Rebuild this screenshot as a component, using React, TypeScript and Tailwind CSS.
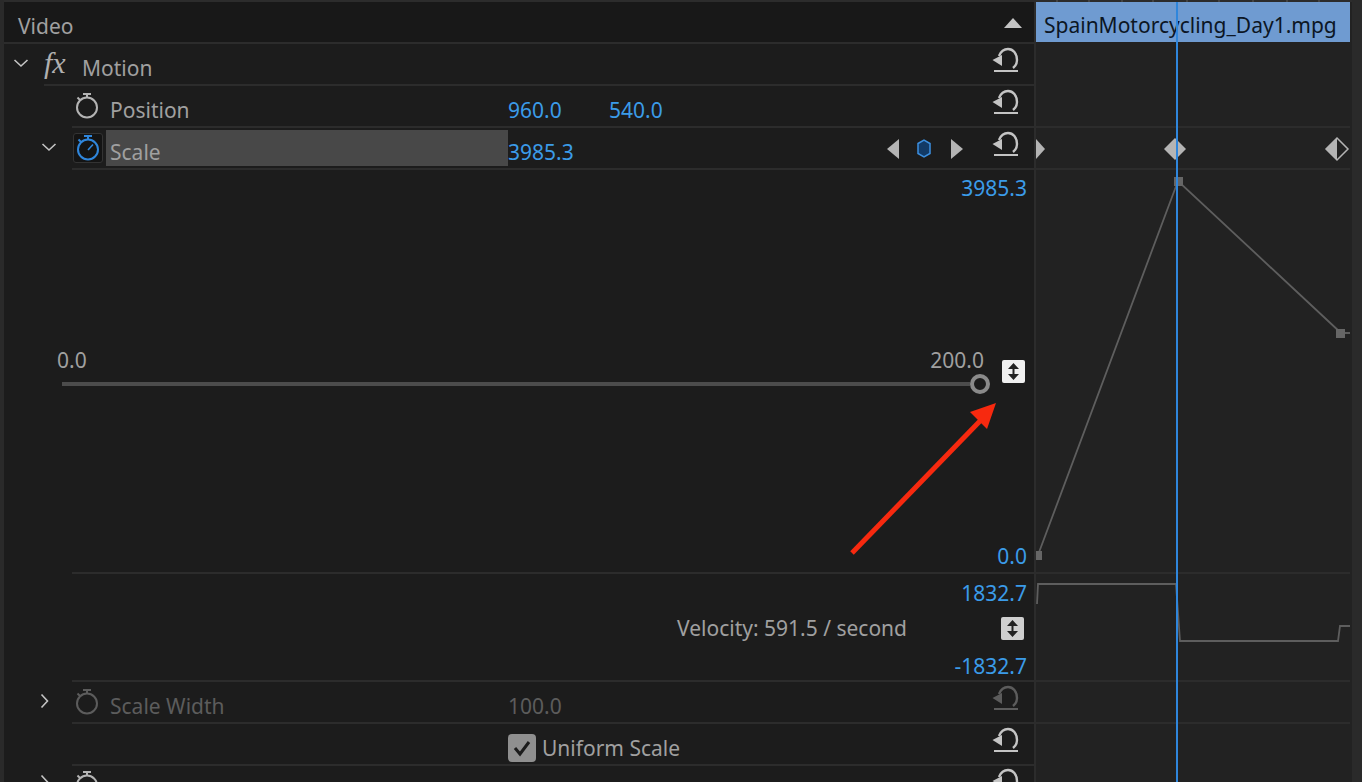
import { ReactNode } from "react";

function Stopwatch({ color = "#b4b4b4", needle = false }: { color?: string; needle?: boolean }) {
    return (
        <svg width="26" height="28" viewBox="0 0 26 28" fill="none" stroke={color} className="shrink-0">
            <circle cx="13" cy="15.5" r="10" strokeWidth="2" />
            <path d="M9 2h8M13 2v3" strokeWidth="2" />
            <path d="M3.500 5.500l2.500 2.500" strokeWidth="2" />
            {needle && <path d="M13 16l5-5.500" strokeWidth="1.600" />}
        </svg>
    );
}

function Reset({ color = "#c4c4c4" }: { color?: string }) {
    return (
        <svg width="27" height="26" viewBox="0 0 27 26" fill="none" className="shrink-0">
            <path d="M7 9C9 4 12 2 16 2c5 0 9 4.500 9 11 0 3.500-1.500 6-4 8" stroke={color} strokeWidth="2.400" />
            <path d="M0.500 13L10 8v11z" fill={color} />
            <path d="M2 24h24" stroke={color} strokeWidth="2" />
        </svg>
    );
}

function Chevron({ open = true, color = "#c4c4c4" }: { open?: boolean; color?: string }) {
    return (
        <svg width="16" height="16" viewBox="0 0 16 16" fill="none" stroke={color} strokeWidth="1.600" className="shrink-0">
            {open ? <path d="M1.500 5l6.500 6 6.500-6" /> : <path d="M4.500 1.500l6 6.500-6 6.500" />}
        </svg>
    );
}

function UpDown({ bg }: { bg: string }) {
    return (
        <div className={`w-[23px] h-[23px] rounded-[2px] flex items-center justify-center ${bg}`}>
            <svg width="13" height="19" viewBox="0 0 13 19" fill="#222222">
                <path d="M6.500 1L12 7H1zM6.500 18L1 12h11z" />
                <rect x="5.500" y="5" width="2" height="9" />
            </svg>
        </div>
    );
}

function Row({ children, line = "ml-[68px]" }: { children: ReactNode; line?: string }) {
    return (
        <div>
            <div className="h-[40px] flex items-center">{children}</div>
            <div className={`h-[2px] bg-[#2c2c2c] ${line}`} />
        </div>
    );
}

function Value({ children, muted }: { children: ReactNode; muted?: boolean }) {
    return <span className={muted ? "text-[#5c5c5c]" : "text-[#3b9be8]"}>{children}</span>;
}

function LeftPanel() {
    return (
        <div className="w-[1034px] shrink-0 bg-[#1c1c1c] border-l-[4px] border-[#2a2a2a] text-[#a0a0a0]">
            <div className="h-[2px] bg-[#2c2c2c]" />
            <div className="h-[40px] bg-[#181818] flex items-center pl-[14px] pr-[12px] justify-between">
                <span className="mt-[10px]">Video</span>
                <div className="w-0 h-0 border-l-[9px] border-r-[9px] border-b-[10px] border-l-transparent border-r-transparent border-b-[#c4c4c4] mt-[2px]" />
            </div>
            <div className="h-[2px] bg-[#2c2c2c]" />

            <Row line="ml-[40px]">
                <div className="w-[40px] pl-[9px] mt-[-2px]"><Chevron /></div>
                <span className="w-[38px] text-[#b0b0b0] text-[30px] italic leading-none mt-[-2px]" style={{ fontFamily: '"Liberation Serif", serif' }}>fx</span>
                <span className="flex-1 mt-[10px]">Motion</span>
                <div className="mr-[15px] mt-[-8px]"><Reset /></div>
            </Row>

            <Row>
                <div className="w-[68px]" />
                <div className="w-[38px] mt-[-1px] pl-[2px]"><Stopwatch /></div>
                <span className="w-[398px] mt-[10px]">Position</span>
                <span className="w-[101px] mt-[10px]"><Value>960.0</Value></span>
                <span className="flex-1 mt-[10px]"><Value>540.0</Value></span>
                <div className="mr-[15px] mt-[-8px]"><Reset /></div>
            </Row>

            <Row>
                <div className="w-[37px] shrink-0" />
                <div className="w-[32px] shrink-0 mt-[-2px]"><Chevron /></div>
                <div className="w-[30px] h-[30px] shrink-0 bg-[#141414] border border-[#333333] rounded-[3px] flex items-center justify-center mr-[3px]">
                    <Stopwatch color="#2f86dc" needle />
                </div>
                <div className="w-[402px] h-[36px] bg-[#484848] flex items-center pl-[4px] shrink-0">
                    <span className="mt-[10px]">Scale</span>
                </div>
                <span className="flex-1 mt-[10px]"><Value>3985.3</Value></span>
                <svg width="92" height="20" viewBox="0 0 92 20" className="mr-[19px] shrink-0 mt-[2px]">
                    <path d="M18 0v20L6 10z" fill="#b4b4b4" />
                    <path d="M37 4.500l6-3.500 6 3.500v10l-6 3.500-6-3.500z" fill="#123a66" stroke="#3b8fe0" strokeWidth="1.500" />
                    <path d="M70 0v20l12-10z" fill="#b4b4b4" />
                </svg>
                <div className="mr-[15px] mt-[-8px]"><Reset /></div>
            </Row>

            <div className="h-[402px] ml-[53px] mr-[7px] flex flex-col">
                <div className="text-right text-[#3b9be8] leading-[30px] mt-[3px]">3985.3</div>
                <div className="flex justify-between mt-[143px] leading-[28px]">
                    <span>0.0</span>
                    <span className="mr-[43px]">200.0</span>
                </div>
                <div className="flex items-center ml-[5px]">
                    <div className="w-[908px] h-[4px] bg-[#4c4c4c]" />
                    <div className="w-[20px] h-[20px] rounded-full border-[4px] border-[#8a8a8a] shrink-0" />
                    <div className="ml-[12px] mt-[-26px]"><UpDown bg="bg-[#f0f0f0]" /></div>
                </div>
                <div className="text-right text-[#3b9be8] leading-[30px] mt-auto mb-[1px]">0.0</div>
            </div>
            <div className="h-[2px] bg-[#2c2c2c] ml-[68px]" />

            <div className="h-[106px] mr-[7px] flex flex-col">
                <div className="text-right text-[#3b9be8] leading-[30px] mt-[4px]">1832.7</div>
                <div className="flex items-center justify-end mt-[5px]">
                    <span className="mr-[94px]">Velocity: 591.5 / second</span>
                    <div className="mr-[3px]"><UpDown bg="bg-[#cfcfcf]" /></div>
                </div>
                <div className="text-right text-[#3b9be8] leading-[30px] mt-[6px]">-1832.7</div>
            </div>
            <div className="h-[2px] bg-[#2c2c2c] ml-[68px]" />

            <Row>
                <div className="w-[33px]" />
                <div className="w-[35px] mt-[-2px]"><Chevron open={false} /></div>
                <div className="w-[38px] mt-[-1px] pl-[2px]"><Stopwatch color="#5c5c5c" /></div>
                <span className="w-[398px] mt-[10px] text-[#5c5c5c]">Scale Width</span>
                <span className="flex-1 mt-[10px]"><Value muted>100.0</Value></span>
                <div className="mr-[15px] mt-[-8px]"><Reset color="#5c5c5c" /></div>
            </Row>

            <Row>
                <div className="w-[504px]" />
                <div className="w-[28px] h-[28px] rounded-[4px] bg-[#8f8f8f] flex items-center justify-center shrink-0 mt-[7px]">
                    <svg width="20" height="20" viewBox="0 0 20 20" fill="none" stroke="#1c1c1c" strokeWidth="3">
                        <path d="M3 10l5 6 9-12" />
                    </svg>
                </div>
                <span className="flex-1 ml-[6px] mt-[10px]">Uniform Scale</span>
                <div className="mr-[15px] mt-[-8px]"><Reset /></div>
            </Row>

            <div className="h-[20px] flex items-start overflow-hidden">
                <div className="w-[33px]" />
                <div className="w-[35px] mt-[8px]"><Chevron open={false} /></div>
                <div className="w-[38px] mt-[4px] pl-[2px]"><Stopwatch /></div>
                <span className="w-[398px] mt-[10px]">Rotation</span>
                <span className="flex-1 mt-[10px]"><Value>0.0</Value></span>
                <div className="mr-[15px] mt-[2px]"><Reset /></div>
            </div>
        </div>
    );
}

function RightPanel() {
    return (
        <div className="w-[318px] shrink-0 bg-[#222222] border-l-[2px] border-[#2c2c2c] relative">
            <svg width="316" height="2" viewBox="0 0 316 2" className="block bg-[#2c2c2c]">
                <path d="M21 0v2M53 0v2M86 0v2M117 0v2M151 0v2M183 0v2M217 0v2M251 0v2M283 0v2" stroke="#5a5a5a" />
            </svg>
            <div className="h-[40px] mr-[2px] bg-[#6f9bd1] flex items-center pl-[8px] text-[#0c1624] whitespace-nowrap">
                <span className="mt-[8px]">SpainMotorcycling_Day1.mpg</span>
            </div>
            <div className="h-[84px]" />
            <div className="h-[2px] bg-[#2c2c2c] mr-[2px]" />
            <svg width="316" height="40" viewBox="0 0 316 40" className="block">
                <path d="M0 11v20l9-10z" fill="#b4b4b4" />
                <path d="M139 10l11 11-11 11-11-11z" fill="#b4b4b4" />
                <path d="M301 10l11 11-11 11-11-11z" fill="none" stroke="#b4b4b4" strokeWidth="1.500" />
                <path d="M301 10l-11 11 11 11z" fill="#b4b4b4" />
            </svg>
            <div className="h-[2px] bg-[#2c2c2c] mr-[2px]" />
            <svg width="316" height="402" viewBox="0 0 316 402" fill="none" className="block">
                <path d="M2 385L142 11L305 163H314" stroke="#5e5e5e" strokeWidth="1.800" />
                <rect x="138" y="7" width="9" height="9" fill="#666666" />
                <rect x="300" y="159" width="9" height="9" fill="#666666" />
                <rect x="0" y="381" width="6" height="9" fill="#666666" />
            </svg>
            <div className="h-[2px] bg-[#2c2c2c] mr-[2px]" />
            <svg width="316" height="106" viewBox="0 0 316 106" fill="none" className="block">
                <path d="M1 30L2 10H140L144 67H302L304 52H314" stroke="#5e5e5e" strokeWidth="1.800" />
            </svg>
            <div className="h-[2px] bg-[#2c2c2c] mr-[2px]" />
            <div className="h-[40px]" />
            <div className="h-[2px] bg-[#2c2c2c] mr-[2px]" />
            <div className="absolute left-[140px] top-[2px] bottom-0 w-[2px] bg-[#2f86dc]" />
        </div>
    );
}

export default function App() {
    return (
        <div className="w-[1362px] h-[782px] overflow-hidden flex bg-[#1a1a1a] relative text-[21px]" style={{ fontFamily: '"Noto Sans", sans-serif' }}>
            <LeftPanel />
            <RightPanel />
            <div className="flex-1 bg-[#2a2a2a]" />
            {/* red annotation arrow */}
            <svg width="160" height="160" viewBox="0 0 160 160" fill="none" className="absolute left-[840px] top-[400px]">
                <path d="M12 153L140 21" stroke="#f7290f" strokeWidth="5" />
                <path d="M156 3L147 29L130 12z" fill="#f7290f" />
            </svg>
        </div>
    );
}
